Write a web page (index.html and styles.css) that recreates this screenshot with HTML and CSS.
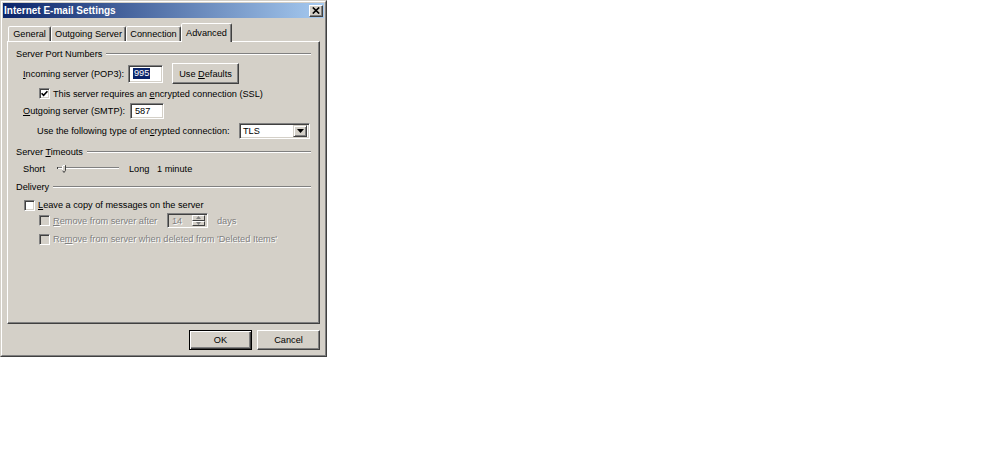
FILE: index.html
```html
<!DOCTYPE html>
<html>
<head>
<meta charset="utf-8">
<title>Internet E-mail Settings</title>
<link rel="stylesheet" href="styles.css">
</head>
<body>
<div class="dialog">
  <div class="frame">
    <div class="titlebar">
      <span class="title">Internet E-mail Settings</span>
      <span class="close"><svg width="8" height="7" viewBox="0 0 8 7"><path d="M0.8 0.5L7.2 6.5M7.2 0.5L0.8 6.5" stroke="#000" stroke-width="1.7"/></svg></span>
    </div>
    <div class="tabs">
      <div class="tab t-general">General</div>
      <div class="tab t-outgoing">Outgoing Server</div>
      <div class="tab t-connection">Connection</div>
      <div class="tab active t-advanced">Advanced</div>
    </div>
    <div class="panel">
      <div class="group g-ports"><span>Server Port Numbers</span><i class="rule"></i></div>

      <div class="row r-incoming">
        <span class="lbl w-in"><u>I</u>ncoming server (POP3):</span>
        <span class="field f-in"><span class="hl">995</span></span>
        <span class="btn b-def"><span>Use <u>D</u>efaults</span></span>
      </div>

      <div class="row r-ssl">
        <span class="cb"><svg width="7" height="7" viewBox="0 0 7 7"><path d="M0.6 3.2L2.6 5.3L6.4 1.2" fill="none" stroke="#000" stroke-width="1.6"/></svg></span>
        <span class="cbt">This server requires an <u>e</u>ncrypted connection (SSL)</span>
      </div>

      <div class="row r-out">
        <span class="lbl w-out"><u>O</u>utgoing server (SMTP):</span>
        <span class="field f-out">587</span>
      </div>

      <div class="row r-enc">
        <span class="lbl w-enc">Use the following type of en<u>c</u>rypted connection:</span>
        <span class="field f-sel"><span class="seltext">TLS</span><span class="drop"><svg width="7" height="4" viewBox="0 0 7 4"><path d="M0 0H7L3.5 4z" fill="#000"/></svg></span></span>
      </div>

      <div class="group g-time"><span>Server <u>T</u>imeouts</span><i class="rule"></i></div>

      <div class="row r-time">
        <span class="lbl w-short">Short</span>
        <svg class="slider" width="62" height="8" viewBox="0 0 62 8">
          <rect x="0" y="2" width="62" height="1" fill="#808080"/>
          <rect x="0" y="3" width="62" height="1" fill="#fff"/>
          <rect x="0" y="2" width="1" height="2" fill="#404040"/>
          <path d="M5.5 0.5H8.5V5.5L7 7.5L5.5 5.5Z" fill="#d4d0c8" stroke="#404040" stroke-width="1"/>
          <path d="M5.5 5.5V0.5H8" fill="none" stroke="#fff" stroke-width="1"/>
        </svg>
        <span class="lbl w-long">Long</span>
        <span class="lbl">1 minute</span>
      </div>

      <div class="group g-del"><span>Delivery</span><i class="rule"></i></div>

      <div class="row r-leave">
        <span class="cb c-leave"></span>
        <span class="cbt"><u>L</u>eave a copy of messages on the server</span>
      </div>

      <div class="row r-after">
        <span class="cb dis c-sub"></span>
        <span class="cbt dis-t w-after"><u>R</u>emove from server after</span>
        <span class="field spin"><span class="spintext dis-t">14</span><span class="spinbtns"><span class="sb"><svg width="5" height="3" viewBox="0 0 5 3"><path d="M0 3H5L2.5 0z" fill="#808080"/></svg></span><span class="sb"><svg width="5" height="3" viewBox="0 0 5 3"><path d="M0 0H5L2.5 3z" fill="#808080"/></svg></span></span></span>
        <span class="dis-t days">days</span>
      </div>

      <div class="row r-when">
        <span class="cb dis c-sub"></span>
        <span class="cbt dis-t">Re<u>m</u>ove from server when deleted from 'Deleted Items'</span>
      </div>
    </div>
    <div class="footer">
      <span class="btn b-ok"><span>OK</span></span>
      <span class="btn b-cancel"><span>Cancel</span></span>
    </div>
  </div>
</div>
</body>
</html>
```

FILE: styles.css
```css
* { box-sizing: border-box; margin: 0; padding: 0; }
body {
  margin: 0;
  background: #fff;
  font-family: "Liberation Sans", Arial, sans-serif;
  font-size: 9.2px;
  line-height: 12px;
  color: #000;
}
u { text-decoration: underline; text-underline-offset: 1px; }

.dialog {
  width: 327px;
  height: 357px;
  background: #d4d0c8;
  border: 1px solid;
  border-color: #d4d0c8 #404040 #404040 #d4d0c8;
}
.frame {
  height: 355px;
  border: 1px solid;
  border-color: #fff #808080 #808080 #fff;
  padding: 1px;
  display: flex;
  flex-direction: column;
}

/* title bar */
.titlebar {
  flex: none;
  height: 15px;
  display: flex;
  align-items: center;
  justify-content: space-between;
  padding: 0 1px 0 1px;
  background: linear-gradient(to right, #0a246a 0%, #a6caf0 100%);
}
.title {
  color: #fff;
  font-weight: bold;
  font-size: 10px;
}
.close {
  width: 14px;
  height: 12px;
  display: flex;
  align-items: center;
  justify-content: center;
  background: #d4d0c8;
  border: 1px solid;
  border-color: #fff #404040 #404040 #fff;
  box-shadow: inset -1px -1px #808080;
}

/* tabs */
.tabs {
  flex: none;
  display: flex;
  align-items: flex-end;
  height: 19px;
  margin: 5px 0 -1px 5px;
}
.tab {
  height: 15px;
  margin-bottom: 1px;
  border: 1px solid;
  border-bottom: 0;
  border-color: #fff #404040 transparent #fff;
  border-radius: 2px 2px 0 0;
  box-shadow: inset -1px 0 #808080;
  background: #d4d0c8;
  text-align: center;
  line-height: 12px;
  padding-top: 1px;
  white-space: nowrap;
}
.t-general { width: 43px; }
.t-outgoing { width: 75px; }
.t-connection { width: 55px; }
.tab.active {
  width: 51px;
  height: 19px;
  margin-bottom: 0;
  padding-top: 3px;
  position: relative;
  z-index: 1;
}

/* panel */
.panel {
  flex: none;
  width: 313px;
  height: 283px;
  margin-left: 4px;
  border: 1px solid;
  border-color: #fff #404040 #404040 #fff;
  box-shadow: inset -1px -1px #808080;
  padding: 5px 8px 0 8px;
}
.group {
  display: flex;
  align-items: center;
  height: 14px;
  white-space: nowrap;
}
.rule {
  flex: 1;
  height: 2px;
  margin-left: 4px;
  border-top: 1px solid #808080;
  border-bottom: 1px solid #fff;
}
.g-time { margin-top: 6px; }
.g-del { margin-top: 4px; }

.row {
  display: flex;
  align-items: center;
  height: 14px;
  margin-top: 4px;
  white-space: nowrap;
}
.lbl { flex: none; }

.r-incoming { height: 21px; margin-top: 2px; padding-left: 7px; }
.w-in { width: 105px; }
.r-ssl { height: 13px; margin-top: 3px; padding-left: 23px; }
.r-out { height: 17px; margin-top: 2px; padding-left: 7px; }
.w-out { width: 107px; }
.r-enc { height: 17px; margin-top: 3px; padding-left: 21px; }
.w-enc { width: 202px; }
.r-time { margin-top: 3px; padding-left: 7px; }
.w-short { width: 34px; }
.slider { flex: none; margin-left: 0; }
.w-long { width: 28px; margin-left: 10px; }
.r-leave { margin-top: 4px; padding-left: 8px; }
.r-after { height: 15px; margin-top: 1px; padding-left: 23px; }
.w-after { width: 114px; }
.r-when { margin-top: 4px; padding-left: 23px; }

/* controls */
.field {
  flex: none;
  display: flex;
  align-items: center;
  background: #fff;
  border: 1px solid;
  border-color: #808080 #fff #fff #808080;
  box-shadow: inset 1px 1px #404040, inset -1px -1px #d4d0c8;
  padding-left: 4px;
}
.f-in { width: 35px; height: 18px; }
.hl { background: #0a246a; color: #fff; padding: 0 1px; line-height: 11px; }
.f-out { width: 34px; height: 16px; }
.f-sel { width: 71px; height: 16px; padding: 2px 2px 2px 3px; justify-content: space-between; }
.drop {
  width: 14px;
  height: 12px;
  display: flex;
  align-items: center;
  justify-content: center;
  background: #d4d0c8;
  border: 1px solid;
  border-color: #d4d0c8 #404040 #404040 #d4d0c8;
  box-shadow: inset 1px 1px #fff, inset -1px -1px #808080;
}
.spin {
  width: 41px;
  height: 15px;
  background: #d4d0c8;
  padding: 2px 2px 2px 4px;
  justify-content: space-between;
}
.spinbtns { display: flex; flex-direction: column; width: 13px; height: 11px; }
.sb {
  flex: 1;
  display: flex;
  align-items: center;
  justify-content: center;
  background: #d4d0c8;
  border: 1px solid;
  border-color: #fff #404040 #404040 #fff;
}
.days { margin-left: 9px; }

.cb {
  flex: none;
  width: 11px;
  height: 11px;
  display: flex;
  align-items: center;
  justify-content: center;
  background: #fff;
  border: 1px solid;
  border-color: #808080 #fff #fff #808080;
  box-shadow: inset 1px 1px #404040, inset -1px -1px #d4d0c8;
}
.cb.dis { background: #d4d0c8; }
.cbt { margin-left: 3px; }
.dis-t { color: #808080; text-shadow: 1px 1px 0 #fff; }

.btn {
  flex: none;
  display: flex;
  align-items: center;
  justify-content: center;
  background: #d4d0c8;
  border: 1px solid;
  border-color: #fff #404040 #404040 #fff;
  box-shadow: inset -1px -1px #808080;
  white-space: nowrap;
}
.b-def { width: 67px; height: 21px; margin-left: 9px; }

/* footer */
.footer {
  flex: none;
  display: flex;
  justify-content: flex-end;
  gap: 5px;
  margin: 6px 4px 0 0;
}
.b-ok, .b-cancel { width: 63px; height: 20px; }
.b-ok {
  border-color: #000;
  box-shadow: inset 1px 1px #fff, inset -1px -1px #404040, inset -2px -2px #808080;
}
```
